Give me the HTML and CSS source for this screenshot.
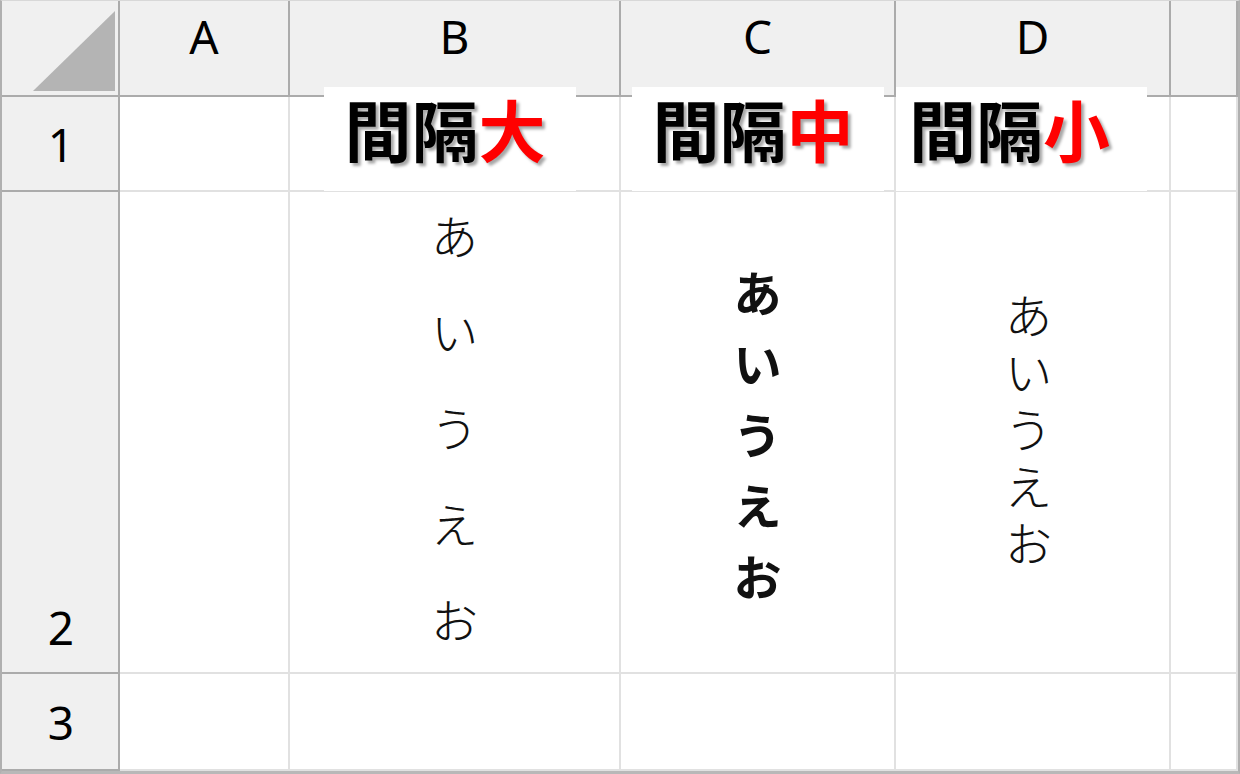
FILE: index.html
```html
<!DOCTYPE html>
<html lang="ja">
<head>
    <meta charset="UTF-8">
    <meta name="viewport" content="width=device-width, initial-scale=1.0">
    <title>文字の間隔</title>
    <link rel="stylesheet" href="styles.css">
</head>
<body>
    <div class="sheet">
        <div class="grid">
            <div class="corner"><span class="corner-mark"></span></div>
            <div class="col-head">A</div>
            <div class="col-head">B</div>
            <div class="col-head">C</div>
            <div class="col-head">D</div>
            <div class="col-head"></div>

            <div class="row-head">1</div>
            <div class="cell"></div>
            <div class="cell"></div>
            <div class="cell"></div>
            <div class="cell"></div>
            <div class="cell"></div>

            <div class="row-head row-head-bottom">2</div>
            <div class="cell"></div>
            <div class="cell cell-center">
                <div class="kana kana-large">あいうえお</div>
            </div>
            <div class="cell cell-center">
                <div class="kana kana-medium">あいうえお</div>
            </div>
            <div class="cell cell-center">
                <div class="kana kana-small">あいうえお</div>
            </div>
            <div class="cell"></div>

            <div class="row-head">3</div>
            <div class="cell"></div>
            <div class="cell"></div>
            <div class="cell"></div>
            <div class="cell"></div>
            <div class="cell"></div>
        </div>

        <!-- text boxes laid over the sheet -->
        <div class="label label-b">間隔<span class="accent">大</span></div>
        <div class="label label-c">間隔<span class="accent">中</span></div>
        <div class="label label-d">間隔<span class="accent">小</span></div>
    </div>
</body>
</html>
```

FILE: styles.css
```css
body {
    margin: 0;
    background-color: #ffffff;
    font-family: 'Noto Sans', 'Noto Sans CJK JP', sans-serif;
}

.sheet {
    position: relative;
    width: 1240px;
    height: 774px;
    box-sizing: border-box;
    border-left: 2px solid #b0b0b0;
    border-right: 2px solid #b0b0b0;
    border-bottom: 3px solid #b8b8b8;
    border-top: 1px solid #d8d8d8;
    background-color: #ffffff;
    overflow: hidden;
}

.grid {
    display: grid;
    grid-template-columns: 118px 170px 331px 275px 275px 1fr;
    grid-template-rows: 96px 95px 482px 97px;
}

.corner,
.col-head,
.row-head {
    background-color: #f0f0f0;
    box-sizing: border-box;
    border-right: 2px solid #ababab;
    border-bottom: 2px solid #ababab;
    color: #000000;
    font-size: 46px;
    line-height: 1;
}

.corner {
    position: relative;
}

.corner-mark {
    position: absolute;
    left: 31px;
    top: 10px;
    width: 82px;
    height: 80px;
    background-color: #b4b4b4;
    clip-path: polygon(100% 0, 100% 100%, 0 100%);
}

.col-head {
    display: flex;
    justify-content: center;
    align-items: flex-start;
    padding-top: 12px;
}

.row-head {
    display: flex;
    justify-content: center;
    align-items: center;
    padding-left: 2px;
}

.row-head-bottom {
    align-items: flex-end;
    padding-bottom: 22px;
}

.cell {
    box-sizing: border-box;
    border-right: 2px solid #e1e1e1;
    border-bottom: 2px solid #e1e1e1;
}

.cell-center {
    display: flex;
    justify-content: center;
    align-items: center;
}

.kana {
    writing-mode: vertical-rl;
    font-family: 'Noto Sans CJK JP', sans-serif;
    font-size: 48px;
    line-height: 1;
    color: #111111;
}

.kana-large {
    letter-spacing: 48px;
    margin-bottom: -48px;
    margin-top: -6px;
    font-weight: 300;
}

.kana-medium {
    letter-spacing: 22px;
    margin-bottom: -22px;
    margin-top: 6px;
    font-weight: 700;
    font-size: 49px;
}

.kana-small {
    letter-spacing: 9px;
    margin-bottom: -9px;
    margin-top: -4px;
    margin-right: 8px;
    font-weight: 300;
}

.label {
    position: absolute;
    top: 86px;
    height: 104px;
    background-color: #ffffff;
    display: flex;
    justify-content: center;
    align-items: center;
    font-family: 'Noto Sans CJK JP', sans-serif;
    font-size: 67px;
    font-weight: 700;
    line-height: 1;
    color: #000000;
    text-shadow: 3px 3px 3px rgba(0, 0, 0, 0.35);
    padding-bottom: 24px;
    box-sizing: border-box;
}

.accent {
    color: #ff0000;
}

.label-b {
    left: 322px;
    width: 252px;
    padding-right: 10px;
}

.label-c {
    left: 630px;
    width: 252px;
    padding-right: 10px;
}

.label-d {
    left: 894px;
    width: 251px;
    padding-right: 24px;
}
```
